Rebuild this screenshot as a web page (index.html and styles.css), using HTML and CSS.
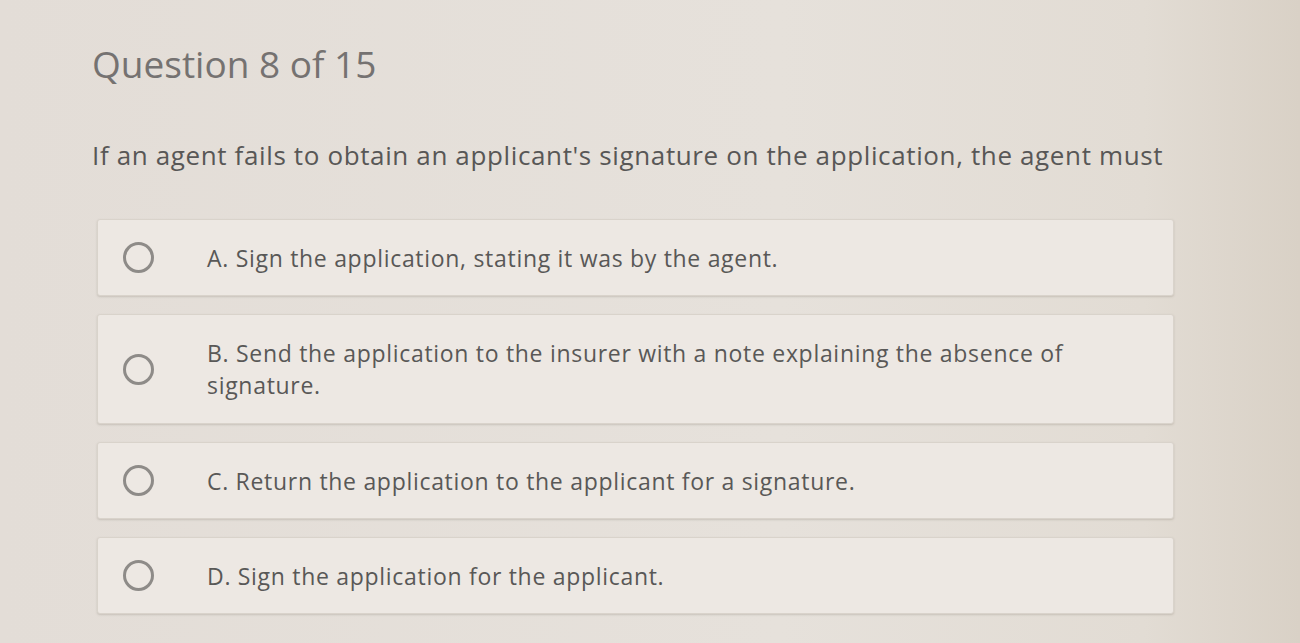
FILE: index.html
```html
<!DOCTYPE html>
<html>
<head>
<meta charset="utf-8">
<link rel="stylesheet" href="styles.css">
</head>
<body>
<main class="quiz">
  <h1 class="title">Question 8 of 15</h1>
  <p class="prompt">If an agent fails to obtain an applicant's signature on the application, the agent must</p>
  <div class="options">
    <label class="option">
      <span class="radio"></span>
      <span class="text">A. Sign the application, stating it was by the agent.</span>
    </label>
    <label class="option tall">
      <span class="radio"></span>
      <span class="text">B. Send the application to the insurer with a note explaining the absence of signature.</span>
    </label>
    <label class="option">
      <span class="radio"></span>
      <span class="text">C. Return the application to the applicant for a signature.</span>
    </label>
    <label class="option">
      <span class="radio"></span>
      <span class="text">D. Sign the application for the applicant.</span>
    </label>
  </div>
</main>
</body>
</html>
```
FILE: styles.css
```css
html, body {
  margin: 0;
  padding: 0;
}
body {
  width: 1300px;
  height: 643px;
  overflow: hidden;
  background: linear-gradient(90deg, #e3ddd7 0%, #e6e1db 60%, #e2dcd4 88%, #d9d1c6 100%);
  font-family: "Open Sans", "Noto Sans", sans-serif;
  color: #5c5c5c;
}
.quiz {
  padding: 38px 0 0 92px;
  width: 1082px;
}
.title {
  margin: 0;
  font-size: 37px;
  font-weight: 400;
  color: #757271;
  line-height: 52px;
}
.prompt {
  margin: 47px 0 0 0;
  font-size: 26px;
  font-weight: 400;
  letter-spacing: 0.63px;
  line-height: 36px;
  color: #585756;
  white-space: nowrap;
}
.options {
  margin-top: 46px;
  display: flex;
  flex-direction: column;
  gap: 18px;
  padding-left: 5px;
}
.option {
  display: flex;
  align-items: center;
  min-height: 77px;
  box-sizing: border-box;
  background: #ede8e3;
  border: 1px solid #d9d3cb;
  border-radius: 3px;
  box-shadow: 0 1px 2px rgba(120, 110, 100, 0.25);
}
.option.tall {
  min-height: 110px;
}
.radio {
  flex: none;
  width: 25px;
  height: 25px;
  border: 3.5px solid #8e8b88;
  border-radius: 50%;
  margin: 0 53px 0 25px;
}
.text {
  font-size: 23px;
  font-weight: 400;
  letter-spacing: 0.7px;
  line-height: 32px;
  color: #595857;
  padding-right: 60px;
}
```
